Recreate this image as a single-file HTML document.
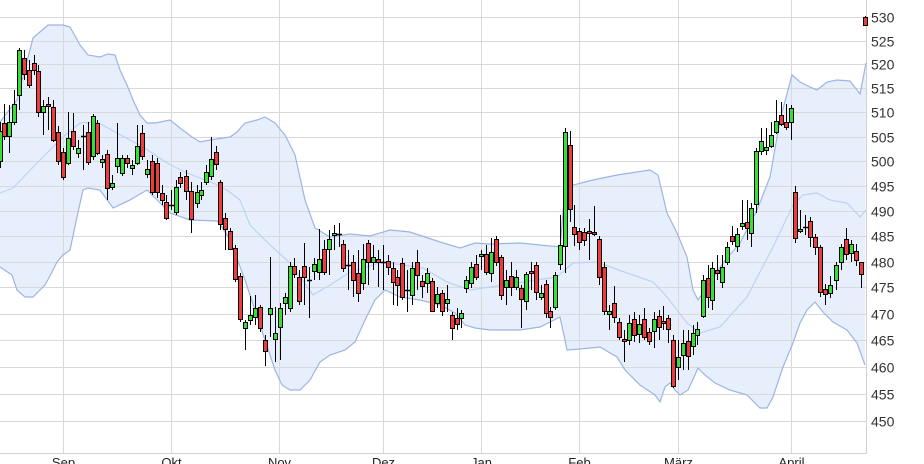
<!DOCTYPE html>
<html><head><meta charset="utf-8">
<style>
html,body{margin:0;padding:0;background:#fff;}
svg{display:block;font-family:"Liberation Sans",sans-serif;}
</style></head>
<body>
<svg id="c" width="924" height="464" viewBox="0 0 924 464" xmlns="http://www.w3.org/2000/svg"></svg>
<script>
var s='';
var up=[[0,122],[17,100],[33,38],[48,25],[63,25],[70,27],[80,45],[88,55],[100,57],[108,54],[115,55],[120,70],[127,85],[133,100],[140,115],[147,123],[155,123],[170,120],[180,128],[192,137],[200,142],[210,140],[230,137],[237,132],[245,123],[257,120],[265,117],[275,123],[285,135],[295,155],[305,200],[315,228],[330,237],[350,234],[370,236],[390,230],[410,232],[425,237],[440,242],[460,248],[475,243],[490,244],[520,243],[540,245],[560,247],[565,190],[573,185],[593,180],[617,175],[650,170],[658,175],[667,213],[677,233],[687,257],[693,290],[698,300],[707,287],[723,263],[740,243],[757,210],[770,177],[780,120],[792,75],[800,82],[810,87],[817,90],[827,82],[837,80],[850,81],[860,94],[866,63]];
var lo=[[0,267],[12,275],[17,290],[25,297],[33,297],[40,290],[45,285],[52,272],[57,262],[63,255],[70,250],[77,217],[83,190],[88,188],[100,190],[113,208],[130,200],[147,190],[157,200],[170,213],[190,220],[217,221],[220,224],[230,240],[245,280],[255,310],[265,340],[275,370],[282,385],[290,390],[300,390],[310,380],[320,362],[330,355],[345,350],[355,342],[365,320],[375,300],[385,290],[400,297],[420,300],[440,305],[455,313],[465,325],[475,328],[490,330],[520,330],[540,327],[560,317],[565,340],[567,350],[580,349],[600,347],[617,357],[625,370],[640,385],[655,395],[660,402],[665,387],[670,383],[675,390],[680,395],[688,390],[695,375],[698,368],[705,375],[715,383],[730,390],[747,395],[760,408],[767,408],[773,397],[783,367],[793,343],[800,323],[807,310],[815,302],[823,312],[833,322],[847,330],[857,343],[865,365]];
var mid=[[0,193],[13,188],[40,160],[63,137],[80,123],[97,122],[117,133],[143,147],[167,163],[187,173],[213,183],[227,190],[240,200],[250,225],[270,245],[290,263],[313,295],[330,285],[350,272],[383,262],[423,268],[447,282],[470,290],[490,287],[523,282],[557,277],[573,263],[597,262],[627,273],[653,282],[667,297],[687,323],[700,333],[720,327],[747,297],[773,247],[793,205],[803,195],[817,193],[830,200],[847,203],[860,217],[866,210]];
function pts(a){return a.map(function(p){return p[0]+','+p[1]}).join(' ');}
s+='<polygon points="'+pts(up)+' '+pts(lo.slice().reverse())+'" fill="#e8effc" stroke="none"/>';
var G=[[530,17],[525,41],[520,64],[515,88],[510,112],[505,137],[500,161],[495,186],[490,211],[485,236],[480,262],[475,287],[470,314],[465,340],[460,367],[455,394],[450,421]];
G.forEach(function(g){var y=g[1]+0.5;
 s+='<line x1="0" y1="'+y+'" x2="867" y2="'+y+'" stroke="#d9d9d9" stroke-width="1"/>';
 s+='<text x="871" y="'+(y+5)+'" font-size="14" fill="#333">'+g[0]+'</text>';});
var mons=[[63,'Sep'],[171,'Okt'],[279,'Nov'],[383,'Dez'],[481,'Jan'],[579,'Feb'],[678,'März'],[791,'April']];
mons.forEach(function(m){var x=m[0]+0.5;s+='<line x1="'+x+'" y1="0" x2="'+x+'" y2="453" stroke="#d9d9d9" stroke-width="1"/>';
 s+='<text x="'+x+'" y="467" font-size="13" fill="#222" text-anchor="middle">'+m[1]+'</text>';});
s+='<line x1="866.5" y1="0" x2="866.5" y2="453" stroke="#d0d0d0"/>';
s+='<line x1="0" y1="453.5" x2="867" y2="453.5" stroke="#d0d0d0"/>';
s+='<polyline points="'+pts(mid)+'" fill="none" stroke="#bcd2f4" stroke-width="1.2"/>';
s+='<polyline points="'+pts(up)+'" fill="none" stroke="#9db5e3" stroke-width="1.2"/>';
s+='<polyline points="'+pts(lo)+'" fill="none" stroke="#9db5e3" stroke-width="1.2"/>';
var C=[
[0,'g',131,161,122,168],[4,'r',123,136,104,140],[9,'g',122,136,105,153],[14,'g',104,122,90,125],[19,'g',50,95,48,110],[24,'r',58,74,50,80],[29,'r',70,85,60,88],[34,'r',63,70,55,75],[38,'r',71,112,65,117],[43,'g',106,112,100,135],[48,'r',104,106,97,130],[53,'r',107,140,100,142],[58,'r',132,161,126,165],[63,'r',152,177,148,180],[68,'g',138,163,112,165],[73,'r',131,146,113,150],[78,'g',148,153,140,158],[83,'t',136,136,125,170],[88,'r',132,162,122,165],[93,'g',116,156,114,160],[97,'r',123,153,120,155],[102,'g',159,162,155,168],[107,'r',154,188,150,200],[112,'g',183,187,175,190],[117,'g',158,166,123,173],[122,'g',158,173,155,176],[127,'r',158,163,155,168],[132,'g',165,168,160,175],[137,'g',146,163,125,165],[142,'r',133,156,125,160],[147,'g',169,174,160,178],[152,'r',161,192,155,195],[157,'r',163,192,158,198],[162,'r',193,200,185,205],[166,'r',202,218,195,220],[171,'t',205,205,190,210],[176,'g',187,212,180,215],[180,'r',177,183,172,188],[186,'r',176,191,170,200],[191,'r',191,219,182,233],[197,'g',192,203,185,208],[201,'g',190,195,182,200],[206,'g',172,182,165,185],[211,'g',159,176,137,180],[216,'r',152,164,146,170],[220,'r',182,224,180,230],[225,'r',218,229,213,250],[230,'r',231,249,228,250],[235,'r',248,279,245,282],[240,'r',276,319,273,322],[245,'g',322,328,320,350],[250,'g',315,320,296,325],[255,'g',308,317,295,325],[260,'r',307,328,305,332],[265,'r',340,351,335,366],[270,'g',308,314,257,337],[275,'g',333,339,307,362],[280,'g',308,327,303,360],[285,'g',297,303,293,315],[290,'g',266,308,262,312],[294,'r',266,274,258,278],[299,'r',277,301,270,305],[304,'r',266,277,243,305],[309,'t',280,280,267,318],[314,'g',264,271,258,280],[319,'g',259,272,229,280],[324,'r',249,272,240,275],[329,'g',239,249,230,275],[334,'g',233,235,225,250],[339,'t',234,234,223,247],[343,'r',244,268,240,272],[348,'t',265,265,250,290],[353,'r',262,280,255,297],[358,'r',273,293,250,302],[363,'g',259,283,244,290],[368,'r',243,262,240,285],[373,'g',257,262,245,270],[378,'r',259,262,250,287],[383,'t',262,262,245,290],[388,'r',261,267,255,275],[393,'r',268,282,262,305],[397,'r',277,285,270,306],[402,'r',263,297,258,300],[407,'t',290,290,270,312],[412,'g',268,295,262,305],[417,'r',262,275,250,290],[422,'r',281,286,275,298],[427,'g',273,283,268,293],[432,'r',281,311,278,312],[437,'g',294,303,287,308],[442,'r',293,311,290,316],[447,'g',299,303,285,312],[452,'r',315,328,312,340],[457,'r',318,324,308,330],[461,'g',313,318,310,328],[466,'g',280,288,276,293],[471,'g',267,283,262,288],[476,'r',264,277,255,280],[481,'g',254,256,250,270],[486,'r',254,272,245,275],[491,'g',252,273,238,282],[496,'r',239,262,236,266],[501,'r',257,295,255,300],[506,'g',280,287,270,305],[511,'r',276,287,262,296],[516,'g',277,287,270,290],[521,'r',288,299,285,328],[526,'g',274,301,272,310],[531,'r',271,273,262,290],[536,'r',265,292,262,300],[541,'g',293,297,285,300],[546,'r',284,313,280,318],[550,'r',311,317,307,328],[555,'g',275,307,272,310],[560,'g',245,264,215,270],[565,'g',132,246,128,273],[570,'r',145,209,131,222],[574,'r',227,234,205,246],[579,'r',231,242,228,250],[584,'r',232,240,228,246],[589,'r',231,233,219,260],[594,'r',232,233,206,236],[599,'r',239,277,236,285],[604,'r',267,311,262,315],[609,'g',311,314,305,330],[614,'r',303,317,286,323],[619,'r',322,337,318,340],[624,'r',339,341,330,362],[629,'g',323,340,315,345],[634,'r',319,335,312,342],[639,'g',324,334,315,343],[644,'r',319,337,308,340],[649,'r',332,341,328,345],[654,'g',319,331,312,348],[659,'r',316,327,310,340],[663,'r',321,323,306,330],[668,'r',318,329,315,343],[673,'r',340,386,335,388],[678,'g',357,367,340,380],[683,'g',343,355,330,370],[688,'r',341,356,330,370],[693,'g',333,346,325,355],[697,'g',329,335,322,345],[703,'g',280,316,275,318],[708,'r',278,297,265,308],[712,'g',268,300,262,310],[717,'r',270,273,255,280],[722,'g',267,282,255,288],[727,'g',247,262,242,265],[732,'r',236,241,226,245],[737,'g',234,246,228,252],[742,'g',223,226,200,230],[747,'r',222,228,200,240],[751,'g',208,233,203,247],[756,'g',151,204,148,213],[761,'g',141,151,128,155],[766,'g',147,150,128,155],[771,'g',135,146,122,148],[776,'g',121,132,100,134],[781,'r',115,124,102,126],[786,'r',122,127,104,130],[791,'g',108,122,105,140],[795,'r',192,238,186,243],[800,'g',229,231,210,233],[805,'t',227,227,215,235],[810,'r',221,237,217,247],[815,'r',237,247,234,255],[820,'r',247,292,245,297],[825,'r',289,294,284,305],[830,'g',285,293,276,298],[836,'g',265,280,262,290],[841,'g',247,262,244,270],[846,'r',239,254,228,260],[851,'g',244,253,240,262],[856,'r',251,260,244,266],[861,'r',262,274,262,288],[865,'r',17,25,16,26]];
C.forEach(function(c){var x=c[0]+0.5;
 s+='<line x1="'+x+'" y1="'+c[4]+'" x2="'+x+'" y2="'+c[5]+'" stroke="#000" stroke-width="1"/>';
 if(c[1]=='t'){s+='<line x1="'+(x-2.5)+'" y1="'+(c[2]+0.5)+'" x2="'+(x+2.5)+'" y2="'+(c[2]+0.5)+'" stroke="#000" stroke-width="1.5"/>';}
 else{var h=Math.max(c[3]-c[2],2);
 s+='<rect x="'+(c[0]-1.5)+'" y="'+(c[2]+0.5)+'" width="4" height="'+h+'" fill="'+(c[1]=='g'?'#33e033':'#ef3b3b')+'" stroke="#000" stroke-width="1"/>';}
});
document.getElementById('c').innerHTML=s;
</script>
</body></html>
